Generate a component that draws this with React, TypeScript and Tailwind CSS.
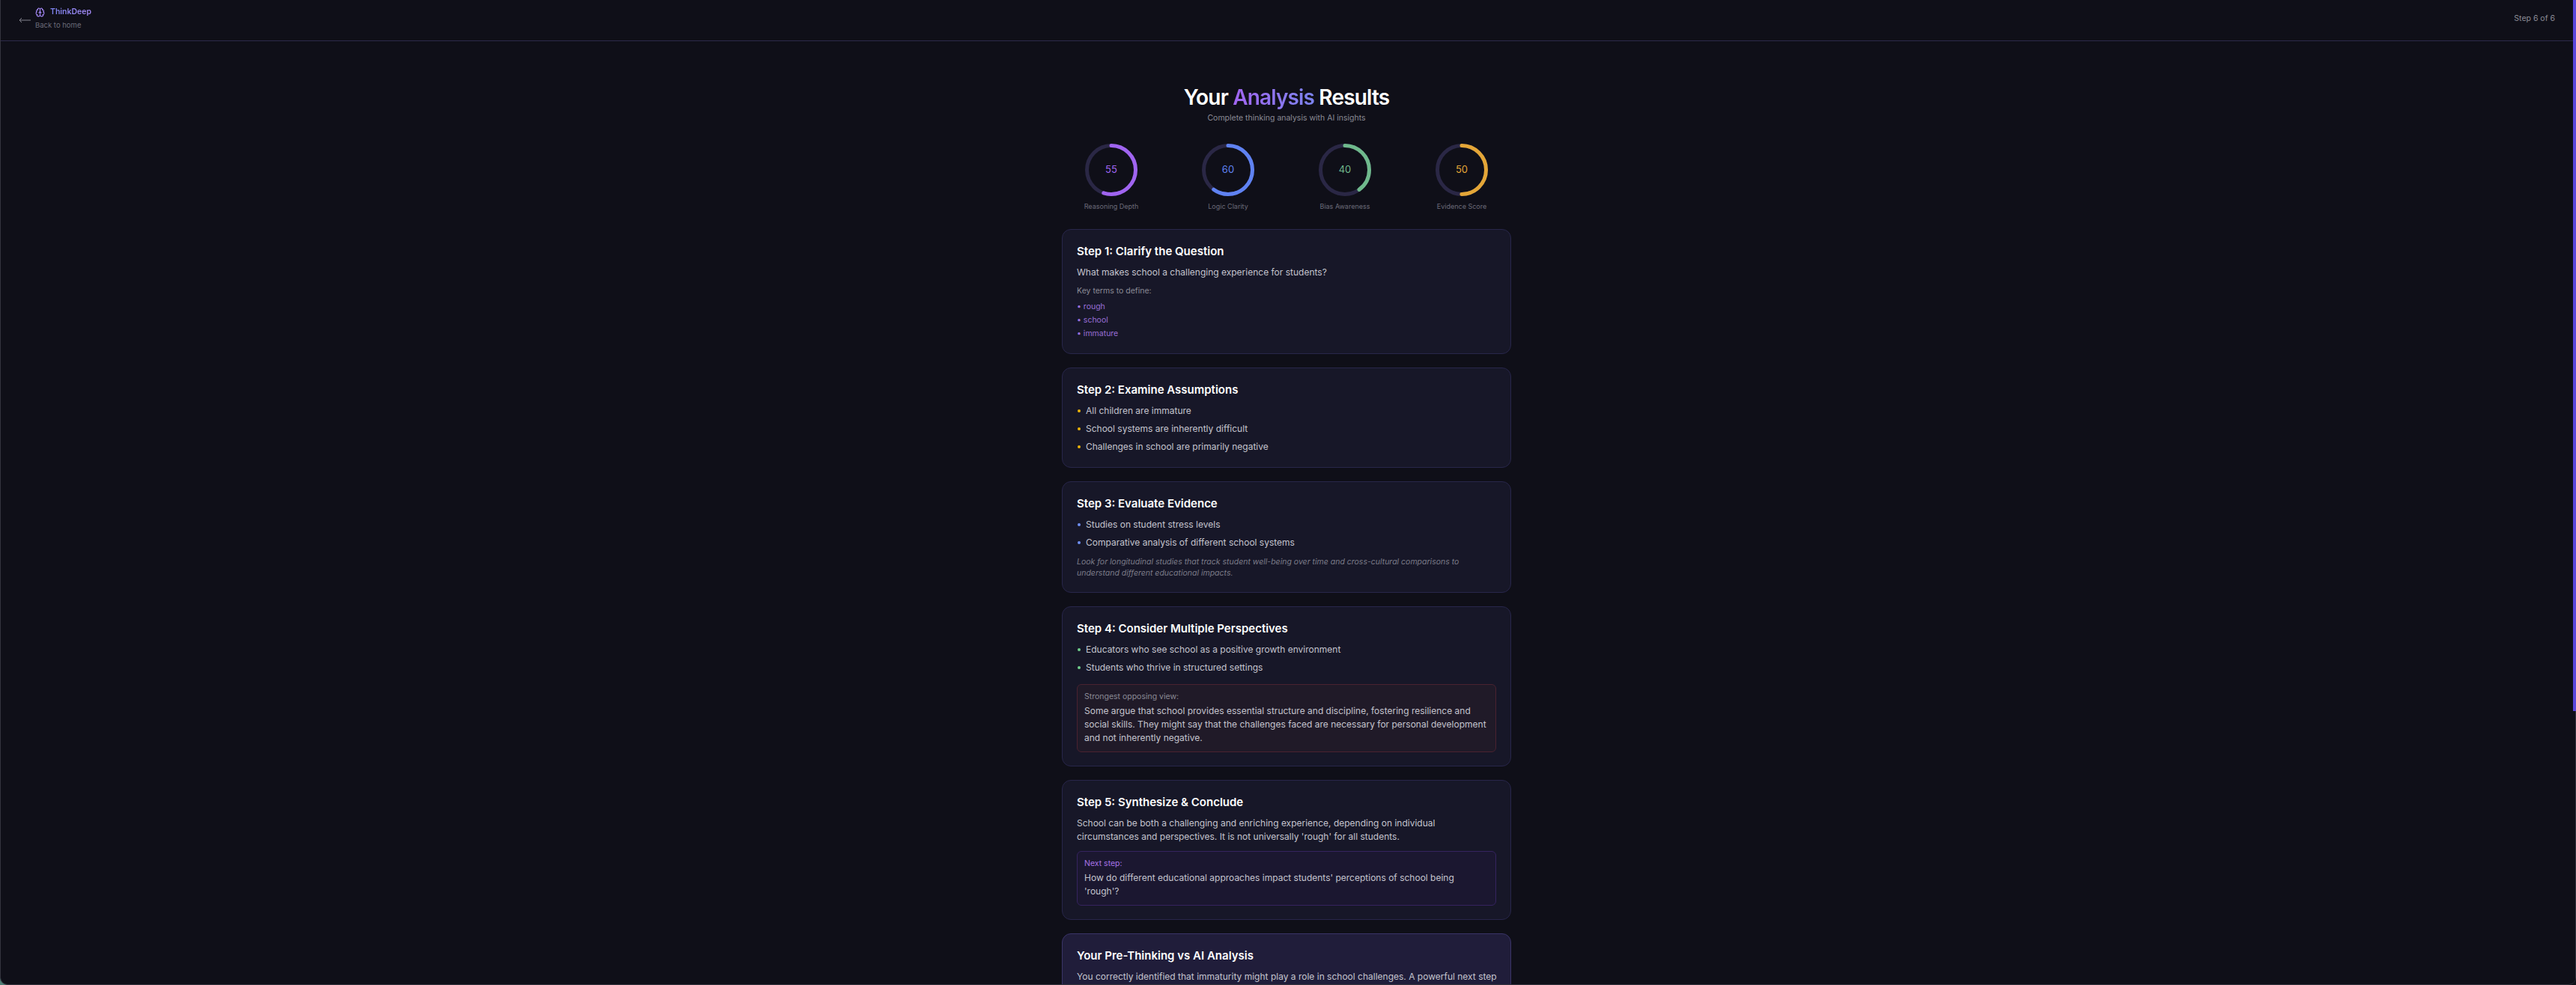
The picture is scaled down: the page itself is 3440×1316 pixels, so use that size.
import { Brain } from "lucide-react";

const stats = [
  { label: "Reasoning Depth", value: 55, color: "#a064f0", text: "text-[#a064f0]" },
  { label: "Logic Clarity", value: 60, color: "#5f82f2", text: "text-[#5f82f2]" },
  { label: "Bias Awareness", value: 40, color: "#6fb98c", text: "text-[#6fb98c]" },
  { label: "Evidence Score", value: 50, color: "#e4a637", text: "text-[#e4a637]" },
];

function Ring({ value, color }: { value: number; color: string }) {
  const r = 32.5;
  const c = 2 * Math.PI * r;
  return (
    <svg width="70" height="70" viewBox="0 0 70 70" className="-rotate-90">
      <circle cx="35" cy="35" r={r} fill="none" stroke="#2a2745" strokeWidth="5" />
      <circle
        cx="35"
        cy="35"
        r={r}
        fill="none"
        stroke={color}
        strokeWidth="5"
        strokeLinecap="round"
        strokeDasharray={`${(c * value) / 100} ${c}`}
      />
    </svg>
  );
}

function Bullets({ items, dot }: { items: string[]; dot: string }) {
  return (
    <ul className="flex flex-col gap-[6px]">
      {items.map((item) => (
        <li key={item} className="flex items-center gap-[7px] text-[12px] leading-[18px] text-[#c4c4ce]">
          <span className={`ml-[1px] w-[4px] h-[4px] rounded-full shrink-0 ${dot}`} />
          {item}
        </li>
      ))}
    </ul>
  );
}

function Card({ title, children, tint }: { title: string; children: React.ReactNode; tint?: boolean }) {
  return (
    <section
      className={
        tint
          ? "rounded-[12px] border border-[#3a3468] bg-[#201d3a] px-[19px] pt-[19px] pb-[18px]"
          : "rounded-[12px] border border-[#28264a] bg-[#171728] px-[19px] pt-[19px] pb-[18px]"
      }
    >
      <h2 className="text-[15px] leading-[20px] font-semibold text-white mb-[9px]">{title}</h2>
      {children}
    </section>
  );
}

export default function App() {
  return (
    <div className="h-screen bg-gradient-to-r from-[#4f7f76] via-[#101018] to-[#101018]">
      <div className="h-full overflow-hidden bg-[#0f0f18] font-['Inter',sans-serif] border-l border-b border-[#34343e] rounded-b-[10px] flex">
        <div className="flex-1 min-w-0 flex flex-col">
          <header className="h-[55px] shrink-0 border-b border-[#2c2a4a] flex items-start justify-between pt-[8px] pl-[24px] pr-[24px]">
            <div className="flex items-start gap-[6px]">
              <svg width="16" height="8" viewBox="0 0 16 8" fill="none" stroke="#85858f" strokeWidth="1" className="mt-[15px]">
                <path d="M16 4H1M4 1 1 4l3 3" />
              </svg>
              <div>
                <div className="flex items-center gap-[7px]">
                  <Brain size={13} color="#a78bfa" strokeWidth={2} />
                  <span className="text-[10.5px] leading-[16px] font-semibold bg-gradient-to-r from-[#7b83ee] to-[#a78bfa] bg-clip-text text-transparent">
                    ThinkDeep
                  </span>
                </div>
                <div className="text-[9.5px] leading-[14px] mt-[3px] text-[#6b6b78]">Back to home</div>
              </div>
            </div>
            <div className="text-[10.5px] leading-[16px] mt-[9px] text-[#8b8b96]">Step 6 of 6</div>
          </header>

          <main className="flex-1 overflow-hidden pr-[1px]">
            <div className="w-[600px] mx-auto pt-[57px]">
              <h1 className="text-center text-[28px] leading-[36px] font-semibold tracking-[-0.03em] text-white">
                Your{" "}
                <span className="bg-gradient-to-r from-[#a064f0] to-[#7b83ee] bg-clip-text text-transparent">Analysis</span>{" "}
                Results
              </h1>
              <p className="text-center text-[10.5px] leading-[16px] text-[#8b8b96] mt-[2px]">
                Complete thinking analysis with AI insights
              </p>

              <div className="grid grid-cols-4 mt-[26px] -mx-[12px]">
                {stats.map((s) => (
                  <div key={s.label} className="flex flex-col items-center">
                    <div className="relative w-[70px] h-[70px]">
                      <Ring value={s.value} color={s.color} />
                      <span className={`absolute inset-0 flex items-center justify-center text-[13px] ${s.text}`}>{s.value}</span>
                    </div>
                    <span className="mt-[7px] text-[9px] leading-[14px] text-[#6b6b78]">{s.label}</span>
                  </div>
                ))}
              </div>

              <div className="flex flex-col gap-[18px] mt-[23px]">
                <Card title="Step 1: Clarify the Question">
                  <p className="text-[12px] leading-[18px] text-[#c4c4ce]">What makes school a challenging experience for students?</p>
                  <p className="text-[10.5px] leading-[16px] text-[#8b8b96] mt-[8px]">Key terms to define:</p>
                  <ul className="mt-[5px] flex flex-col gap-[2px] text-[10.5px] leading-[16px] text-[#9a6fd8]">
                    <li>• rough</li>
                    <li>• school</li>
                    <li>• immature</li>
                  </ul>
                </Card>

                <Card title="Step 2: Examine Assumptions">
                  <Bullets
                    dot="bg-[#eab308]"
                    items={["All children are immature", "School systems are inherently difficult", "Challenges in school are primarily negative"]}
                  />
                </Card>

                <Card title="Step 3: Evaluate Evidence">
                  <Bullets dot="bg-[#6f8ff5]" items={["Studies on student stress levels", "Comparative analysis of different school systems"]} />
                  <p className="mt-[9px] text-[10.5px] leading-[15px] italic text-[#7c7c88]">
                    Look for longitudinal studies that track student well-being over time and cross-cultural comparisons to understand different educational impacts.
                  </p>
                </Card>

                <Card title="Step 4: Consider Multiple Perspectives">
                  <Bullets dot="bg-[#6fcf8c]" items={["Educators who see school as a positive growth environment", "Students who thrive in structured settings"]} />
                  <div className="mt-[13px] rounded-[6px] border border-[#4a2230] bg-[#201a28] px-[9px] py-[9px]">
                    <p className="text-[10.5px] leading-[14px] text-[#8b8b96]">Strongest opposing view:</p>
                    <p className="text-[12px] leading-[18px] text-[#c4c4ce] mt-[3px]">
                      Some argue that school provides essential structure and discipline, fostering resilience and social skills. They might say that the challenges faced are necessary for personal development and not inherently negative.
                    </p>
                  </div>
                </Card>

                <Card title="Step 5: Synthesize & Conclude">
                  <p className="text-[12px] leading-[18px] text-[#c4c4ce]">
                    School can be both a challenging and enriching experience, depending on individual circumstances and perspectives. It is not universally 'rough' for all students.
                  </p>
                  <div className="mt-[10px] rounded-[6px] border border-[#35235f] bg-[#1b1730] px-[9px] py-[9px]">
                    <p className="text-[10.5px] leading-[14px] text-[#a874e8]">Next step:</p>
                    <p className="text-[12px] leading-[18px] text-[#c4c4ce] mt-[3px]">
                      How do different educational approaches impact students' perceptions of school being 'rough'?
                    </p>
                  </div>
                </Card>

                <Card tint title="Your Pre-Thinking vs AI Analysis">
                  <p className="text-[12px] leading-[18px] whitespace-nowrap text-[#c4c4ce]">
                    You correctly identified that immaturity might play a role in school challenges. A powerful next step
                  </p>
                </Card>
              </div>
            </div>
          </main>
        </div>
        <div className="w-[4px] shrink-0 flex flex-col">
          <div className="h-[950px] shrink-0 bg-[#5b48dc]" />
          <div className="flex-1 border-r border-[#34343e] rounded-br-[10px]" />
        </div>
      </div>
    </div>
  );
}
